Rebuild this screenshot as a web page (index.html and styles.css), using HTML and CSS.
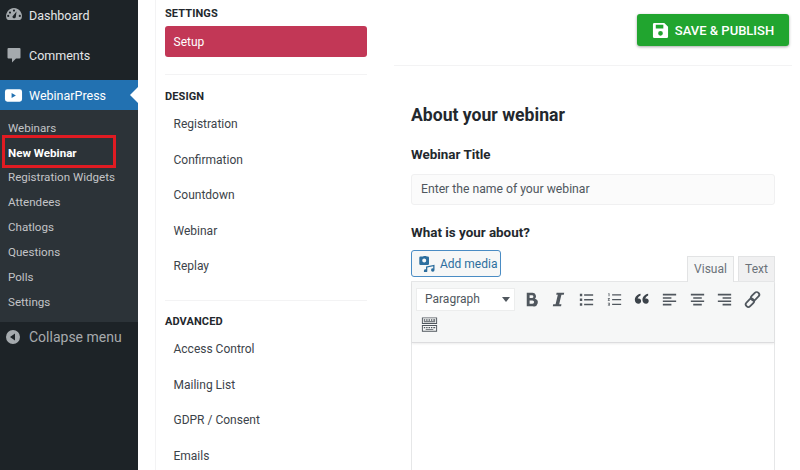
FILE: index.html
```html
<!DOCTYPE html>
<html lang="en">
<head>
<meta charset="utf-8">
<title>New Webinar</title>
<link rel="stylesheet" href="styles.css">
</head>
<body>
<div class="app">
  <nav class="wp-menu">
    <div class="top-items">
      <a class="top-item"><svg class="mi" viewBox="0 0 20 20"><path d="M10 3a8 8 0 0 0-7.500 10.600c.3.8 1 1.400 1.900 1.400h11.200c.9 0 1.600-.6 1.900-1.400A8 8 0 0 0 10 3zM6 6.500a1.100 1.100 0 1 1 0 2.200 1.100 1.100 0 0 1 0-2.200zM4.200 12a1.100 1.100 0 1 1 0-2.200 1.100 1.100 0 0 1 0 2.200zM10 4.500a1.100 1.100 0 1 1 0 2.200 1.100 1.100 0 0 1 0-2.200zM10.800 13.200a1.700 1.700 0 0 1-2.300-1.800L12.500 6.500 11.800 11.900a1.700 1.700 0 0 1-1 1.300zM15.800 12a1.100 1.100 0 1 1 0-2.200 1.100 1.100 0 0 1 0 2.200z" fill="#a5aaae" fill-rule="evenodd"/></svg><span>Dashboard</span></a>
      <a class="top-item"><svg class="mi" viewBox="0 0 20 20"><path d="M4.500 3h11a1 1 0 0 1 1 1v8.500a1 1 0 0 1-1 1H12l-4 4v-4H4.500a1 1 0 0 1-1-1V4a1 1 0 0 1 1-1z" fill="#a5aaae"/></svg><span>Comments</span></a>
    </div>
    <a class="current"><svg class="mi yt" viewBox="0 0 20 20"><path d="M3.500 3.500h13A2.500 2.500 0 0 1 19 6v8a2.500 2.500 0 0 1-2.500 2.500h-13A2.500 2.500 0 0 1 1 14V6a2.500 2.500 0 0 1 2.500-2.500zM8 7.300v5.400l4.500-2.700z" fill="#fff" fill-rule="evenodd"/></svg><span>WebinarPress</span><i class="notch"></i></a>
    <ul class="submenu">
      <li>Webinars</li>
      <li class="active">New Webinar<span class="highlight"></span></li>
      <li>Registration Widgets</li>
      <li>Attendees</li>
      <li>Chatlogs</li>
      <li>Questions</li>
      <li>Polls</li>
      <li>Settings</li>
    </ul>
    <a class="collapse"><svg class="mi" viewBox="0 0 20 20"><path d="M10 3a7 7 0 1 1 0 14 7 7 0 0 1 0-14zM12 6.500 7 10l5 3.500z" fill="#a5aaae" fill-rule="evenodd"/></svg><span>Collapse menu</span></a>
  </nav>

  <aside class="side">
    <h4 class="side-title first">SETTINGS</h4>
    <div class="side-active">Setup</div>
    <hr class="side-rule rule-a">
    <h4 class="side-title">DESIGN</h4>
    <ul class="side-list">
      <li>Registration</li><li>Confirmation</li><li>Countdown</li><li>Webinar</li><li>Replay</li>
    </ul>
    <hr class="side-rule rule-b">
    <h4 class="side-title">ADVANCED</h4>
    <ul class="side-list">
      <li>Access Control</li><li>Mailing List</li><li>GDPR / Consent</li><li>Emails</li>
    </ul>
  </aside>

  <main class="main">
    <header class="topbar">
      <button class="save"><svg class="save-ic" viewBox="0 0 18 18"><path d="M2.500 1H13l4 4v10.500a1.500 1.500 0 0 1-1.500 1.500h-13A1.500 1.500 0 0 1 1 15.500v-13A1.500 1.500 0 0 1 2.500 1zM4 3v4h8V3zM9 9.500a2.500 2.500 0 1 0 0 5 2.500 2.500 0 0 0 0-5z" fill="#fff" fill-rule="evenodd"/></svg>SAVE &amp; PUBLISH</button>
    </header>
    <section class="form">
      <h2>About your webinar</h2>
      <label class="lbl">Webinar Title</label>
      <div class="input">Enter the name of your webinar</div>
      <label class="lbl lbl2">What is your about?</label>
      <div class="editor-head">
        <button class="media"><svg class="media-ic" viewBox="0 0 16 16"><path d="M1.500.5H4l.8-.5H7l.8.5h1a1.200 1.200 0 0 1 1.200 1.200v6a1.200 1.200 0 0 1-1.200 1.200H1.500A1.200 1.200 0 0 1 .3 7.700v-6A1.200 1.200 0 0 1 1.500.5zM5.200 2.500a2 2 0 1 0 0 4 2 2 0 0 0 0-4z" fill="#2c6e9e" fill-rule="evenodd"/><path d="M7 10.400 15.500 8.800v5.200a1.700 1.700 0 1 1-1.300-1.600v-2.100l-5.900 1.100v3.500a1.700 1.700 0 1 1-1.300-1.600z" fill="#2c6e9e"/></svg>Add media</button>
        <div class="tabs"><span class="tab on">Visual</span><span class="tab">Text</span></div>
      </div>
      <div class="editor">
        <div class="toolbar">
          <div class="tb-row">
            <div class="select"><span>Paragraph</span><i class="caret"></i></div>
            <svg class="ti" viewBox="0 0 20 20"><path d="M5 3h6a3.700 3.700 0 0 1 2.700 6.300A4 4 0 0 1 11.500 17H5zM8 5.500v3h2.500a1.500 1.500 0 0 0 0-3zM8 11v3.500h3a1.750 1.750 0 0 0 0-3.500z" fill="#50575e" fill-rule="evenodd"/></svg>
            <svg class="ti" viewBox="0 0 20 20"><path d="M8 3h8l-.4 2h-2.500l-2.400 10h2.400l-.4 2H4l.4-2h2.500L9.300 5H7.600z" fill="#50575e"/></svg>
            <svg class="ti" viewBox="0 0 20 20"><path d="M3 4h2.500v2.500H3zM3 9h2.500v2.500H3zM3 14h2.500v2.500H3zM7.500 4.500H17V6H7.500zM7.500 9.500H17V11H7.500zM7.500 14.500H17V16H7.500z" fill="#50575e"/></svg>
            <svg class="ti" viewBox="0 0 20 20"><path d="M7.500 4.500H17v1.200H7.500zM7.500 9.500H17v1.200H7.500zM7.500 14.500H17v1.200H7.500zM3.500 3.500h1.200v3h-.9V4.300h-.3zM3 8.500h2v.9l-1.100 1.100H5v.7H3v-.8l1.200-1.200H3zM3 13.500h2v3.200H3v-.7h1.200v-.5H3.400v-.7h.8v-.5H3z" fill="#50575e"/></svg>
            <svg class="ti" viewBox="0 0 20 20"><path d="M9 4v1.800C7 6.700 6.200 8 6 9.300c.3-.2.700-.3 1.100-.3 1.500 0 2.500 1 2.500 2.500 0 1.700-1.200 2.900-2.800 2.900C4.800 14.400 3 12.800 3 10.400 3 7.300 5.400 4.800 9 4zM17 4v1.800c-2 .9-2.800 2.200-3 3.500.3-.2.700-.3 1.100-.3 1.500 0 2.500 1 2.500 2.500 0 1.700-1.200 2.900-2.800 2.900-2 0-3.800-1.600-3.800-4 0-3.100 2.400-5.600 6-6.400z" fill="#3c434a"/></svg>
            <svg class="ti" viewBox="0 0 20 20"><path d="M3 4h14v1.700H3zM3 7.500h9v1.700H3zM3 11h14v1.700H3zM3 14.500h9v1.700H3z" fill="#50575e"/></svg>
            <svg class="ti" viewBox="0 0 20 20"><path d="M3 4h14v1.700H3zM5.500 7.500h9v1.700h-9zM3 11h14v1.700H3zM5.500 14.500h9v1.700h-9z" fill="#50575e"/></svg>
            <svg class="ti" viewBox="0 0 20 20"><path d="M3 4h14v1.700H3zM8 7.500h9v1.700H8zM3 11h14v1.700H3zM8 14.500h9v1.700H8z" fill="#50575e"/></svg>
            <svg class="ti" viewBox="0 0 20 20"><g fill="none" stroke="#50575e" stroke-width="1.900"><rect x="10" y="1.500" width="5.500" height="10" rx="2.700" transform="rotate(45 12.750 6.500)"/><rect x="4.500" y="8.500" width="5.500" height="10" rx="2.700" transform="rotate(45 7.250 13.500)"/></g></svg>
          </div>
          <div class="tb-row row2">
            <svg class="ti kb" viewBox="0 0 20 20"><path d="M2 2.500h16v7H2zM3 3.500v5h14v-5zM4 4.500h1.500V6H4zM6.500 4.500H8V6H6.500zM9 4.500h1.500V6H9zM11.500 4.500H13V6h-1.500zM14 4.500h2V6h-2zM4 6.700h12v.8H4zM2 10.500h16v7H2zM3 11.500v5h14v-5zM4 12.500h1.500V14H4zM6.500 12.500H8V14H6.500zM9 12.500h1.500V14H9zM11.500 12.500H13V14h-1.500zM14 12.500h2V14h-2zM6 14.700h8v.9H6z" fill="#50575e" fill-rule="evenodd"/></svg>
          </div>
        </div>
      </div>
    </section>
  </main>
</div>
</body>
</html>
```
FILE: styles.css
```css
* { box-sizing: border-box; }
html, body { margin: 0; height: 470px; overflow: hidden; }
body { background: #fff; font-family: Roboto, "Liberation Sans", sans-serif; color: #1d2327; }
.app { display: flex; height: 470px; }

.wp-menu { width: 138px; flex: none; background: #1d2327; display: flex; flex-direction: column; color: #f0f0f1; font-size: 12.5px; }
.top-items { height: 80px; display: flex; flex-direction: column; }
.top-item { height: 40px; display: flex; align-items: center; padding-left: 3.5px; margin-top: -5px; margin-bottom: 5px; color: #e4e6e8; }
.mi { width: 20px; height: 20px; flex: none; margin-right: 5.5px; }
.current { height: 30px; background: #2271b1; display: flex; align-items: center; padding-left: 4px; color: #fff; position: relative; }
.yt { width: 19px; height: 19px; margin-right: 6px; }
.notch { position: absolute; right: 0; top: 7px; border: 8px solid transparent; border-right-color: #fff; border-left-width: 0; }
.submenu { list-style: none; margin: 0; padding: 5.700px 0 0; background: #2c3338; height: 212px; font-size: 11.6px; color: #c3c4c7; }
.submenu li { height: 24.85px; line-height: 24.85px; padding-left: 8px; position: relative; }
.submenu li.active { color: #fff; font-weight: 700; }
.highlight { position: absolute; left: 1.500px; top: -5.500px; width: 114px; height: 33px; border: 3px solid #e01b22; }
.collapse { height: 30px; display: flex; align-items: center; padding-left: 3px; color: #a7aaad; font-size: 14px; }
.collapse .mi { margin-right: 6px; }

.side { flex: none; width: 239px; border-left: 1px solid #f3f3f4; margin-left: 17px; padding: 0 0 0 9px; }
.side-title { margin: 0; font-size: 11px; line-height: 14px; font-weight: 700; color: #23282d; letter-spacing: .1px; }
.side-title.first { padding-top: 7px; height: 26px; }
.side-active { width: 202px; height: 31px; background: #c23756; color: #fff; border-radius: 3px; font-size: 12px; line-height: 32px; padding-left: 8.500px; }
.side-rule { border: 0; border-top: 1px solid #f3f3f4; width: 202px; margin: 0; }
.rule-a { margin: 17px 0 15px; }
.rule-b { margin: 15px 0 14px; }
.side-list { list-style: none; margin: 0; padding: 3px 0 0 8.500px; font-size: 12px; color: #3c434a; }
.side-list li { height: 35.6px; line-height: 35.6px; }

.main { flex: 1; min-width: 0; }
.topbar { height: 66px; border-bottom: 1px solid #f3f3f4; display: flex; justify-content: flex-end; padding: 14px 3px 0 0; margin-right: 8px; }
.save { width: 152px; height: 32px; display: flex; align-items: center; justify-content: center; gap: 6px; background: #21a52f; border: 0; border-radius: 3px; color: #fff; font: 500 13px Roboto, sans-serif; box-shadow: 0 1px 3px rgba(0,0,0,.35); padding: 0; }
.save-ic { width: 17px; height: 17px; }
.form { padding: 38px 25px 0 17px; }
h2 { margin: 0; font-size: 17.6px; line-height: 22px; font-weight: 700; color: #23282d; }
.lbl { display: block; font-size: 13.4px; font-weight: 700; line-height: 16px; margin-top: 21px; color: #23282d; }
.input { height: 31px; margin-top: 11px; border: 1px solid #f0f0f1; background: #fbfbfb; border-radius: 3px; padding-left: 9px; line-height: 29px; font-size: 12.2px; color: #50575e; }
.lbl2 { margin-top: 20px; }
.editor-head { display: flex; justify-content: space-between; margin-top: 9px; height: 31px; }
.media { height: 27px; width: 90px; background: #f6f7f7; border: 1px solid #4a8cc4; border-radius: 3px; color: #2c6e9e; font: 12px Roboto, sans-serif; display: flex; align-items: center; gap: 5px; padding: 0 0 0 7px; }
.media-ic { width: 16px; height: 16px; }
.tabs { display: flex; gap: 4px; align-items: flex-end; }
.tab { height: 25px; width: 37px; background: #f0f0f1; border: 1px solid #e2e3e4; border-bottom: 0; font-size: 12px; color: #6b7279; text-align: center; line-height: 24px; }
.tab.on { width: 47px; height: 26px; background: #f6f7f7; margin-bottom: -1px; position: relative; z-index: 1; }
.editor { border: 1px solid #e6e7e8; height: 200px; }
.toolbar { background: #f6f7f7; height: 61px; border-bottom: 1px solid #dcdcde; padding: 4px 4px 0; box-shadow: 0 1px 2px rgba(0,0,0,.08); }
.tb-row { display: flex; align-items: center; gap: 8.700px; height: 26px; }
.row2 { margin-top: -.5px; }
.select { width: 99px; height: 23px; background: #fff; border: 1px solid #eceded; margin-right: -2.200px; display: flex; align-items: center; justify-content: space-between; padding: 0 4px 0 8px; font-size: 12px; color: #50575e; }
.caret { border: 4.500px solid transparent; border-top: 5px solid #50575e; border-bottom: 0; }
.ti { width: 19px; height: 19px; flex: none; }
.kb { margin-left: 3.500px; }
```
